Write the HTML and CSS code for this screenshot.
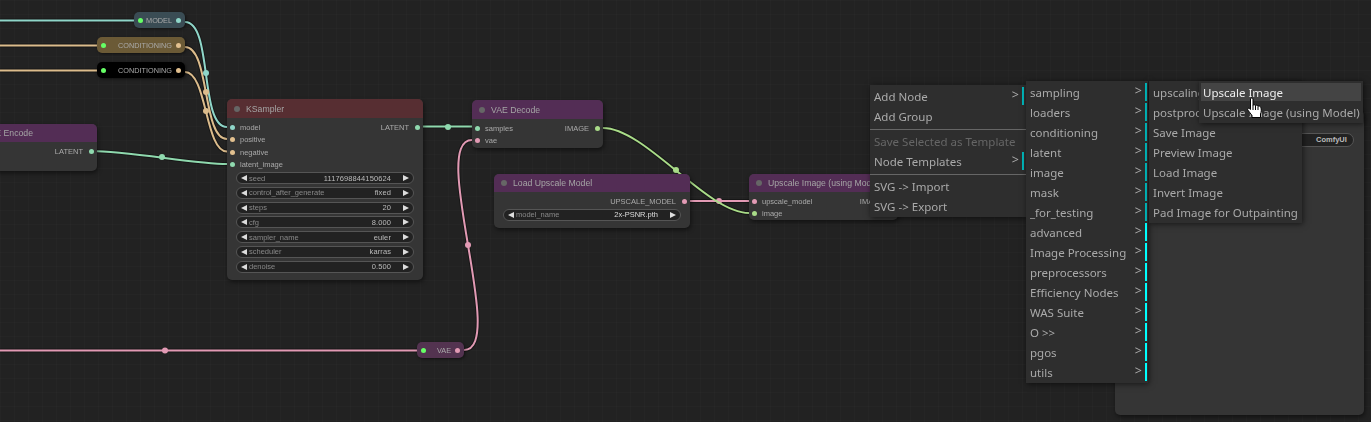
FILE: index.html
```html
<!DOCTYPE html>
<html lang="en">
<head>
    <meta charset="UTF-8">
    <title>ComfyUI</title>
    <link rel="stylesheet" href="styles.css">
</head>
<body>
    <div class="canvas">
        <svg class="links" width="1371" height="422" viewBox="0 0 1371 422">
            <g class="shadows">
                <path d="M0 20.500H134M185 22C213 22 199 127 227 127"/>
                <path d="M0 45.500H97M185 47C210 47 202 139 227 139"/>
                <path d="M0 70.500H97M185 72C207 72 205 151.500 227 151.500"/>
                <path d="M91 151C129 151 195 164 227 164"/>
                <path d="M423 126.500H472"/>
                <path d="M603 128C645 128 707 213 749 213"/>
                <path d="M690 201H749"/>
                <path d="M0 350.500H417M464 350C508 350 428 140 472 140"/>
            </g>
            <path class="vae" d="M690 201H749"/>
            <circle class="vae-dot" cx="719" cy="201" r="3"/>
            <path class="vae" d="M0 350.500H417M464 350C508 350 428 140 472 140"/>
            <path class="model" d="M0 20.500H134M185 22C213 22 199 127 227 127"/>
            <path class="cond" d="M0 45.500H97M185 47C210 47 202 139 227 139"/>
            <path class="cond" d="M0 70.500H97M185 72C207 72 205 151.500 227 151.500"/>
            <path class="latent" d="M91 151C129 151 195 164 227 164"/>
            <path class="latent" d="M423 126.500H472"/>
            <path class="image" d="M603 128C645 128 707 213 749 213"/>
            <circle class="model-dot" cx="206" cy="73" r="3"/>
            <circle class="cond-dot" cx="206" cy="92" r="3"/>
            <circle class="cond-dot" cx="206" cy="111" r="3"/>
            <circle class="latent-dot" cx="162" cy="157" r="3"/>
            <circle class="latent-dot" cx="448" cy="127" r="3"/>
            <circle class="image-dot" cx="676" cy="170" r="3"/>
            <circle class="vae-dot" cx="468" cy="245" r="3"/>
            <circle class="vae-dot" cx="165" cy="350.500" r="3"/>
        </svg>

        <div class="reroute model-node">
            <span class="dot green"></span><span class="reroute-label">MODEL</span><span class="dot c-model"></span>
        </div>
        <div class="reroute cond-node">
            <span class="dot green"></span><span class="reroute-label">CONDITIONING</span><span class="dot c-cond"></span>
        </div>
        <div class="reroute black-node">
            <span class="dot green"></span><span class="reroute-label">CONDITIONING</span><span class="dot c-cond"></span>
        </div>
        <div class="reroute vae-node">
            <span class="dot green"></span><span class="reroute-label">VAE</span><span class="dot c-vae"></span>
        </div>

        <div class="node encode-node">
            <div class="node-head purple"><span class="title">VAE Encode</span></div>
            <div class="slot out"><span>LATENT</span><span class="dot c-latent"></span></div>
        </div>

        <div class="node ksampler">
            <div class="node-head red"><span class="led"></span><span class="title">KSampler</span></div>
            <div class="slot-split">
                <div>
                    <div class="slot"><span class="dot c-model"></span><span>model</span></div>
                    <div class="slot"><span class="dot c-cond"></span><span>positive</span></div>
                    <div class="slot"><span class="dot c-cond"></span><span>negative</span></div>
                    <div class="slot"><span class="dot c-latent"></span><span>latent_image</span></div>
                </div>
                <div class="slot out"><span>LATENT</span><span class="dot c-latent"></span></div>
            </div>
            <div class="widgets">
                <div class="widget"><i class="arrow-l"></i><span class="w-name">seed</span><span class="w-val">1117698844150624</span><i class="arrow-r"></i></div>
                <div class="widget"><i class="arrow-l"></i><span class="w-name">control_after_generate</span><span class="w-val">fixed</span><i class="arrow-r"></i></div>
                <div class="widget"><i class="arrow-l"></i><span class="w-name">steps</span><span class="w-val">20</span><i class="arrow-r"></i></div>
                <div class="widget"><i class="arrow-l"></i><span class="w-name">cfg</span><span class="w-val">8.000</span><i class="arrow-r"></i></div>
                <div class="widget"><i class="arrow-l"></i><span class="w-name">sampler_name</span><span class="w-val">euler</span><i class="arrow-r"></i></div>
                <div class="widget"><i class="arrow-l"></i><span class="w-name">scheduler</span><span class="w-val">karras</span><i class="arrow-r"></i></div>
                <div class="widget"><i class="arrow-l"></i><span class="w-name">denoise</span><span class="w-val">0.500</span><i class="arrow-r"></i></div>
            </div>
        </div>

        <div class="node vae-decode">
            <div class="node-head purple"><span class="led"></span><span class="title">VAE Decode</span></div>
            <div class="slot-split">
                <div>
                    <div class="slot"><span class="dot c-latent"></span><span>samples</span></div>
                    <div class="slot"><span class="dot c-vae"></span><span>vae</span></div>
                </div>
                <div class="slot out"><span>IMAGE</span><span class="dot c-image"></span></div>
            </div>
        </div>

        <div class="node load-upscale">
            <div class="node-head purple"><span class="led"></span><span class="title">Load Upscale Model</span></div>
            <div class="slot out"><span>UPSCALE_MODEL</span><span class="dot c-vae"></span></div>
            <div class="widgets">
                <div class="widget"><i class="arrow-l"></i><span class="w-name">model_name</span><span class="w-val strong">2x-PSNR.pth</span><i class="arrow-r"></i></div>
            </div>
        </div>

        <div class="node upscale-image">
            <div class="node-head purple"><span class="led"></span><span class="title">Upscale Image (using Model)</span></div>
            <div class="slot-split">
                <div>
                    <div class="slot"><span class="dot c-vae"></span><span>upscale_model</span></div>
                    <div class="slot"><span class="dot c-image"></span><span>image</span></div>
                </div>
                <div class="slot out"><span>IMAGE</span><span class="dot c-image"></span></div>
            </div>
        </div>

        <div class="panel">
            <div class="panel-pill">ComfyUI</div>
        </div>

        <div class="menu menu-main">
            <div class="item more">Add Node</div>
            <div class="item">Add Group</div>
            <div class="sep"></div>
            <div class="item disabled">Save Selected as Template</div>
            <div class="item more">Node Templates</div>
            <div class="sep"></div>
            <div class="item">SVG -&gt; Import</div>
            <div class="item">SVG -&gt; Export</div>
        </div>

        <div class="menu menu-cats">
            <div class="item more">sampling</div>
            <div class="item more">loaders</div>
            <div class="item more">conditioning</div>
            <div class="item more">latent</div>
            <div class="item more">image</div>
            <div class="item more">mask</div>
            <div class="item more">_for_testing</div>
            <div class="item more">advanced</div>
            <div class="item more">Image Processing</div>
            <div class="item more">preprocessors</div>
            <div class="item more">Efficiency Nodes</div>
            <div class="item more">WAS Suite</div>
            <div class="item more">O &gt;&gt;</div>
            <div class="item more">pgos</div>
            <div class="item more">utils</div>
        </div>

        <div class="menu menu-image">
            <div class="item">upscaling</div>
            <div class="item">postprocessing</div>
            <div class="item">Save Image</div>
            <div class="item">Preview Image</div>
            <div class="item">Load Image</div>
            <div class="item">Invert Image</div>
            <div class="item">Pad Image for Outpainting</div>
        </div>

        <div class="menu menu-upscale">
            <div class="item active">Upscale Image</div>
            <div class="item">Upscale Image (using Model)</div>
        </div>

        <svg class="cursor" width="16" height="22" viewBox="0 0 16 22">
            <path d="M3.500 2C3.500.500 6 .500 6 2V8.500C6.500 7.500 8 7.500 8.500 8.700C9 7.800 10.700 8 11 9.300C11.500 8.600 13.500 9 13.800 10.500C14.500 12 14.500 15 13.500 17V20.500H5V18.500C3.500 16.500 2 14.500 .8 13C0 11.500 1.500 10.300 3.500 12.500Z"/>
            <path class="cursor-lines" d="M6 8.500V13M8.500 8.700V13M11 9.300V13"/>
        </svg>
    </div>
</body>
</html>
```

FILE: styles.css
```css
html, body { margin: 0; padding: 0; background: #222; overflow: hidden; }
.canvas {
    position: relative;
    width: 1371px;
    height: 422px;
    overflow: hidden;
    background-color: #222;
    background-image:
        linear-gradient(to right, rgba(255,255,255,0.012) 1px, transparent 1px),
        linear-gradient(to bottom, rgba(255,255,255,0.012) 1px, transparent 1px);
    background-size: 14px 14px;
    font-family: "Liberation Sans", Arial, sans-serif;
}

/* links */
.links { position: absolute; left: 0; top: 0; }
.links path { fill: none; stroke-width: 2; }
.shadows path { stroke: rgba(0,0,0,0.35); stroke-width: 4; }
.model { stroke: #8fd6c9; }
.cond { stroke: #dcbc8c; }
.latent { stroke: #8fd9ae; }
.image { stroke: #a9dc88; }
.vae { stroke: #e29ab4; }
.model-dot { fill: #8fd6c9; }
.cond-dot { fill: #dcbc8c; }
.latent-dot { fill: #8fd9ae; }
.image-dot { fill: #a9dc88; }
.vae-dot { fill: #e29ab4; }

/* slots */
.dot { display: block; flex: none; width: 5px; height: 5px; border-radius: 50%; }
.green { background: #66ff66; }
.c-model { background: #8fd6c9; }
.c-cond { background: #e2c08f; }
.c-latent { background: #8fd9ae; }
.c-image { background: #a9dc88; }
.c-vae { background: #e29ab4; }

/* reroute / collapsed nodes */
.reroute {
    position: absolute;
    display: flex;
    align-items: center;
    box-sizing: border-box;
    height: 16px;
    padding: 0 4px;
    border-radius: 5px;
    font-size: 7.300px;
    color: #aaa;
    box-shadow: 1px 1px 3px rgba(0,0,0,0.5);
    will-change: transform;
}
.reroute-label { margin-left: auto; margin-right: 4px; white-space: nowrap; }
.model-node { left: 134px; top: 12px; width: 51px; background: #3a4c54; }
.cond-node { left: 97px; top: 37px; width: 88px; background: #6b5a36; }
.black-node { left: 97px; top: 62px; width: 88px; background: #000; }
.vae-node { left: 417px; top: 342px; width: 47px; background: #533350; }

/* nodes */
.node {
    position: absolute;
    box-sizing: border-box;
    background: #353535;
    border-radius: 5px;
    box-shadow: 1px 2px 4px rgba(0,0,0,0.5);
    font-size: 7.500px;
    color: #aaa;
    will-change: transform;
}
.node-head {
    display: flex;
    align-items: center;
    height: 18px;
    padding: 0 7px;
    border-radius: 5px 5px 0 0;
    font-size: 8.700px;
    color: #a5a5a5;
    white-space: nowrap;
    overflow: hidden;
}
.purple { background: #532d55; }
.red { background: #572e32; }
.led { flex: none; width: 6px; height: 6px; border-radius: 50%; background: #666; margin-right: 6px; }
.slot { display: flex; align-items: center; gap: 5px; height: 12.500px; padding: 0 3px; white-space: nowrap; }
.slot.out { justify-content: flex-end; gap: 6px; }
.slot-split { display: flex; justify-content: space-between; padding-top: 3px; }

.widgets { display: flex; flex-direction: column; gap: 2.800px; padding: 0 9px; }
.widget {
    display: flex;
    align-items: center;
    box-sizing: border-box;
    height: 12px;
    padding: 0 4px;
    background: #222;
    border: 1px solid #555;
    border-radius: 6px;
}
.w-name { margin-left: 2px; color: #888; }
.w-val { margin-left: auto; margin-right: 12px; color: #bbb; letter-spacing: 0.1px; }
.w-val.strong { color: #ddd; letter-spacing: 0; }
.arrow-l, .arrow-r { display: block; flex: none; width: 0; height: 0; border-top: 3.500px solid transparent; border-bottom: 3.500px solid transparent; }
.arrow-l { border-right: 6px solid #ddd; }
.arrow-r { border-left: 6px solid #ddd; }

.encode-node { left: -60px; top: 124px; width: 157px; height: 47px; }
.encode-node .node-head { justify-content: flex-end; padding: 0; }
.encode-node .title { margin-right: 64px; }
.encode-node .slot { margin-top: 3px; }
.ksampler { left: 227px; top: 99px; width: 196px; height: 181px; }
.ksampler .node-head { height: 19px; }
.ksampler .widgets { margin-top: 1px; }
.vae-decode { left: 472px; top: 100px; width: 131px; height: 48px; }
.vae-decode .node-head { height: 19px; }
.load-upscale { left: 494px; top: 174px; width: 196px; height: 54px; }
.load-upscale .slot { margin-top: 3px; }
.load-upscale .widgets { margin-top: 1px; }
.upscale-image { left: 749px; top: 174px; width: 149px; height: 46px; }

/* side panel behind the menus */
.panel {
    position: absolute;
    left: 1115px;
    top: 110px;
    width: 249px;
    height: 305px;
    box-sizing: border-box;
    padding: 23px 10px 0 0;
    background: #353535;
    border-radius: 5px;
    box-shadow: 1px 2px 4px rgba(0,0,0,0.5);
}
.panel-pill {
    box-sizing: border-box;
    width: 60px;
    height: 14px;
    margin-left: auto;
    padding-left: 21px;
    background: #222;
    border: 1px solid #555;
    border-radius: 7px;
    font-size: 7.500px;
    font-weight: bold;
    line-height: 12px;
    color: #bbb;
}

/* context menus */
.menu {
    position: absolute;
    box-sizing: border-box;
    padding: 2px 0;
    background: #2e2e2e;
    box-shadow: 1px 1px 6px rgba(0,0,0,0.6);
    font-family: "Noto Sans", sans-serif;
    font-size: 11.500px;
}
.item {
    position: relative;
    height: 20px;
    line-height: 20px;
    padding: 0 4px;
    color: #aaa;
    white-space: nowrap;
}
.item.more::after {
    content: ">";
    position: absolute;
    right: 6px;
    top: -2px;
    font-size: 12.500px;
}
.item.more::before {
    content: "";
    position: absolute;
    right: 1px;
    top: 0;
    bottom: 2px;
    width: 2px;
    background: #0ff;
}
.item.disabled { color: #666; }
.item.active { background: #444; color: #eee; margin: 0 2px 2px; padding: 0 2px; height: 18px; }
.sep { height: 1px; margin: 2px 0; background: #666; }
.menu-main { left: 870px; top: 85px; width: 156px; height: 132px; }
.menu-main .item.more::before { right: 2px; background: #00b8bc; }
.menu-main .item.more::after { right: 7px; }
.menu-cats { left: 1026px; top: 81px; width: 122px; height: 302px; }
.menu-cats .item:nth-child(-n+7)::before { background: #00b8bc; }
.menu-image { left: 1149px; top: 81px; width: 153px; height: 142px; }
.menu-upscale { left: 1199px; top: 81px; width: 164px; height: 42px; }

.cursor { position: absolute; left: 1247px; top: 97px; }
.cursor path { fill: #fff; stroke: #000; stroke-width: 1; }
.cursor .cursor-lines { fill: none; }
```
